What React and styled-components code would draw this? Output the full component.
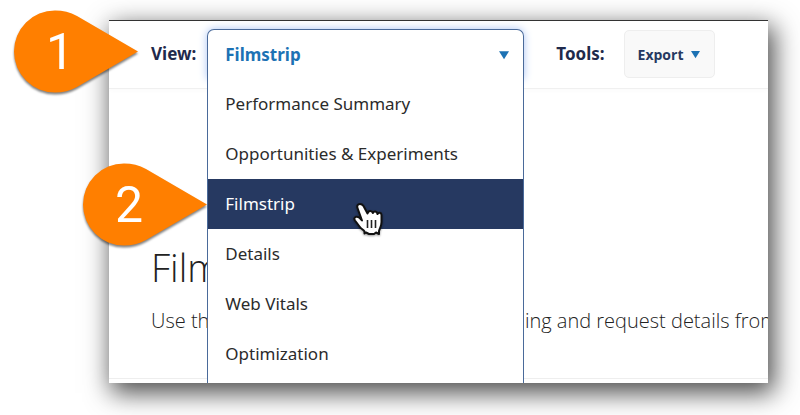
import React, { useState } from 'react';
import styled, { createGlobalStyle } from 'styled-components';

const views = [
    "Performance Summary",
    "Opportunities & Experiments",
    "Filmstrip",
    "Details",
    "Web Vitals",
    "Optimization",
]

function Arrow({ size }) {
    return (
        <ArrowSvg width={size} height={size} viewBox="0 0 10 10" aria-hidden="true">
            <path d="M0 1.2H10L5 9.2Z" fill="#1d72b4" />
        </ArrowSvg>
    );
}

function Marker({ number, top, left }) {
    return (
        <Pin $top={top} $left={left}>
            <svg width="126" height="84" viewBox="0 0 126 84" aria-hidden="true">
                <path d="M125 41.5L64 77C57 80.8 50 82.5 42 82.5A41 41 0 0 1 42 .5C50 .5 57 2.2 64 6Z" fill="#ff7f00" />
            </svg>
            <span>{number}</span>
        </Pin>
    );
}

function Hand() {
    return (
        <HandSvg width="34" height="36" viewBox="0 0 34 36" aria-hidden="true">
            <path d="M8 3C5.500 3 4.800 5 5.500 7L10 19.500C8.500 17.500 6 15 3.800 15.800C2 16.600 2 18 3 19.500L7.500 25.500C9 28 11.500 28.500 12.500 30.500V32.500L14 31.500L17 33H22L24 31.500L27 33V30C28 26.500 29.500 25 29.500 21V14C29.500 11.500 26.500 11 25.500 13C25 10 21.800 9.700 20.800 12C20 9.500 16.500 9 15.500 12.500L11.500 5C10.500 3.500 9.500 3 8 3Z" fill="#fff" stroke="#111" strokeWidth="2" strokeLinejoin="round" />
            <path d="M15.500 19V27M19.500 19V27M23.500 19V27" fill="none" stroke="#222" strokeWidth="1.600" />
        </HandSvg>
    );
}

function App() {
    const [view, setView] = useState("Filmstrip")

    return (
        <Page>
            <GlobalStyle />
            <Panel>
                <Toolbar>
                    <Label htmlFor="view">View:</Label>
                    <Picker>
                        <Head>
                            <select id="view" value={view} onChange={(e) => setView(e.target.value)}>
                                {views.map((name) => <option key={name}>{name}</option>)}
                            </select>
                            <Arrow size={10} />
                        </Head>
                        <Menu>
                            {views.map((name) => (
                                <li key={name}>
                                    <Item type="button" $active={name === view} onClick={() => setView(name)}>
                                        {name}
                                        {name === view && <Hand />}
                                    </Item>
                                </li>
                            ))}
                        </Menu>
                    </Picker>
                    <Tools>
                        <Label as="span">Tools:</Label>
                        <Export type="button">Export <Arrow size={9} /></Export>
                    </Tools>
                </Toolbar>
                <Intro>
                    <h1>Filmstrip</h1>
                    <p>Use this page to explore all the metric timing and request details from any of the tests.</p>
                </Intro>
                <Foot />
            </Panel>
            <Marker number="1" top={10} left={13} />
            <Marker number="2" top={163} left={82} />
        </Page>
    );
}

export default App;

const GlobalStyle = createGlobalStyle`
* { box-sizing: border-box; }
body {
  margin: 0;
  background: #fff;
  overflow: hidden;
  font-family: "Open Sans", "Noto Sans", sans-serif;
}
button, select { font-family: inherit; }
`

const Page = styled.div`
position: relative;
padding: 20px 32px 32px 109px;
`

const Panel = styled.div`
overflow: hidden;
background: #fff;
border-top: 1px solid #333;
box-shadow: 4px 8px 24px 2px rgba(0, 0, 0, 0.7);
`

const Toolbar = styled.div`
display: flex;
align-items: flex-start;
padding: 8px 0 9px 42px;
border-bottom: 1px solid #f0f0f0;
box-shadow: 0 2px 4px rgba(0, 0, 0, 0.02);
`

const Label = styled.label`
font-family: "Noto Sans", sans-serif;
font-size: 17px;
line-height: 50px;
font-weight: 700;
color: #1f2a4c;
white-space: nowrap;
`

const Picker = styled.div`
position: relative;
flex: none;
width: 317px;
margin-left: 11px;
`

const ArrowSvg = styled.svg`
flex: none;
`

const Head = styled.div`
display: flex;
align-items: center;
height: 50px;
padding-right: 14px;
background: #fff;
border: 1px solid #4a6a9a;
border-bottom: 0;
border-radius: 7px 7px 0 0;
box-shadow: 0 0 8px #a9c4f5;

select {
  appearance: none;
  flex: 1;
  height: 48px;
  padding: 0 17px;
  border: 0;
  outline: 0;
  background: none;
  color: #1d72b4;
  font-family: "Noto Sans", sans-serif;
  font-size: 17px;
  font-weight: 700;
}
`

const Menu = styled.ul`
position: absolute;
z-index: 1;
top: 100%;
left: 0;
right: 0;
margin: 0;
padding: 0 0 20px;
list-style: none;
background: #fff;
border: 1px solid #4a6a9a;
border-top: 0;
`

const Item = styled.button`
position: relative;
display: block;
width: 100%;
height: 50px;
padding: 0 17px 2px;
border: 0;
text-align: left;
font-family: "Noto Sans", sans-serif;
font-size: 17px;
color: ${(props) => props.$active ? "#fff" : "#2b2b2b"};
background: ${(props) => props.$active ? "#263961" : "#fff"};
`

const HandSvg = styled.svg`
position: absolute;
z-index: 1;
top: 22px;
left: 144px;
filter: drop-shadow(0 1px 1px rgba(0, 0, 0, 0.4));
`

const Tools = styled.div`
display: flex;
align-items: center;
gap: 19px;
margin-left: 32px;
`

const Export = styled.button`
display: flex;
align-items: center;
justify-content: center;
gap: 8px;
width: 91px;
height: 48px;
padding: 0;
border: 1px solid #eee;
border-radius: 5px;
background: #f9f9f9;
color: #263961;
font-size: 14px;
font-weight: 700;
`

const Intro = styled.div`
padding: 152px 0 41px 42px;
white-space: nowrap;
color: #222;
font-weight: 300;

h1 {
  margin: 0;
  font-size: 38px;
  line-height: 52px;
  font-weight: 300;
}
p {
  margin: 12px 0 0;
  font-size: 20px;
  line-height: 32px;
}
`

const Foot = styled.div`
height: 5px;
border-top: 1px solid #eee;
`

const Pin = styled.div`
position: absolute;
z-index: 2;
top: ${(props) => props.$top}px;
left: ${(props) => props.$left}px;

svg {
  display: block;
  filter: drop-shadow(0 2px 1px rgba(0, 0, 0, 0.5));
}
span {
  position: absolute;
  inset: 0 32px 0 0;
  color: #fff;
  font-family: Roboto, sans-serif;
  font-size: 50px;
  line-height: 84px;
  text-align: center;
}
`
